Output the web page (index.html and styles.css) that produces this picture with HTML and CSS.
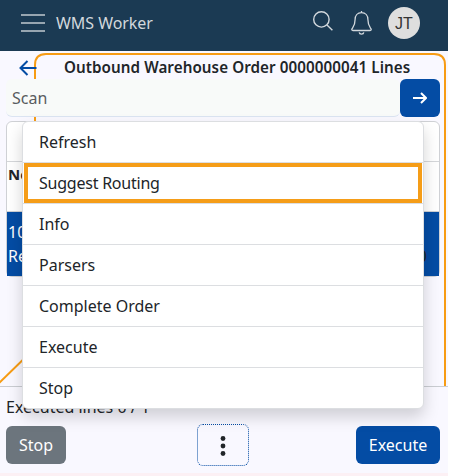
FILE: index.html
```html
<!DOCTYPE html>
<html lang="en">
<head>
<meta charset="utf-8">
<title>WMS Worker</title>
<link rel="stylesheet" href="styles.css">
</head>
<body>
<div class="app">
  <header class="topbar">
    <svg class="menu-icon" width="24" height="20" viewBox="0 0 24 20"><path d="M0 2h24M0 10h24M0 18h24"/></svg>
    <span class="brand">WMS Worker</span>
    <svg class="search" width="20" height="20" viewBox="0 0 20 20"><circle cx="8.4" cy="8.4" r="7.7"/><path d="M14 14l5.4 5.2"/></svg>
    <svg class="bell" width="21" height="24" viewBox="0 0 21 24"><path d="M10.5 0v2M10.5 1.7C6.4 1.7 4.1 4.8 4.1 8.4c0 5.4-1.3 6.900-2.800 9-.8 1.100-.7 2.100.7 2.100h17c1.400 0 1.500-1 .7-2.100-1.500-2.100-2.800-3.600-2.800-9C16.900 4.800 14.600 1.700 10.500 1.700zM8.200 21.400c.3 2.200 4.300 2.200 4.600 0"/></svg>
    <span class="avatar">JT</span>
  </header>
  <main class="content">
    <svg class="backdrop" width="448" height="335" viewBox="0 0 448 335"><path d="M-2 333L35 297V14Q35 3 46 3H434Q445 3 445 14V335"/></svg>
    <div class="title-row">
      <svg class="back" width="18" height="16" viewBox="0 0 18 16"><path d="M8.500 1L1.500 8l7 7M1.500 8H17.500"/></svg>
      <h1>Outbound Warehouse Order 0000000041 Lines</h1>
    </div>
    <div class="scan">
      <input type="text" placeholder="Scan">
      <button class="go" aria-label="Go"><svg width="14" height="12" viewBox="0 0 14 12"><path d="M8 1l5 5-5 5M13 6H0"/></svg></button>
    </div>
    <div class="table">
      <div class="filter"></div>
      <div class="head">No.</div>
      <div class="line"><span>10</span><span>Released<i>0</i></span></div>
    </div>
  </main>
  <footer class="footer">
    <div class="status">Executed lines 0 / 1</div>
    <div class="actions">
      <button class="btn stop">Stop</button>
      <button class="more" aria-label="More"><svg width="6" height="20" viewBox="0 0 6 20"><circle cx="3" cy="2.500" r="2.400"/><circle cx="3" cy="10" r="2.400"/><circle cx="3" cy="17.500" r="2.400"/></svg></button>
      <button class="btn execute">Execute</button>
    </div>
  </footer>
  <ul class="menu">
    <li>Refresh</li>
    <li class="active">Suggest Routing</li>
    <li>Info</li>
    <li>Parsers</li>
    <li>Complete Order</li>
    <li>Execute</li>
    <li>Stop</li>
  </ul>
</div>
</body>
</html>
```
FILE: styles.css
```css
* { box-sizing: border-box; }
body {
  margin: 0;
  background: #fff;
  color: #212529;
  font: 16px/24px "Noto Sans", sans-serif;
  overflow: hidden;
}
button, input { font: inherit; margin: 0; }
svg { display: block; flex: none; fill: none; }
.app {
  position: relative;
  display: flex;
  flex-direction: column;
  width: 448px;
  height: 476px;
  background: #fcf0f4;
}
.topbar {
  display: flex;
  align-items: center;
  height: 51px;
  padding: 0 28px 5px 21px;
  background: #1b3a53;
  color: #d2d8dd;
}
.menu-icon { stroke: #97a5b0; stroke-width: 1.8; }
.brand { margin-left: 11px; flex: 1; letter-spacing: -.05px; }
.search { stroke: #d2d8dd; stroke-width: 1.4; margin-right: 18px; margin-top: -4px; }
.bell { stroke: #d2d8dd; stroke-width: 1.3; margin-right: 16px; }
.avatar {
  width: 32px;
  height: 32px;
  border-radius: 50%;
  background: #dedede;
  color: #333;
  font: 16px/33px "Liberation Sans", sans-serif;
  text-align: center;
}
.content {
  position: relative;
  height: 335px;
  padding: 0 8px 0 6px;
  background: #f9f8ff;
}
.backdrop {
  position: absolute;
  left: 0;
  top: 0;
  stroke: #f79c14;
  stroke-width: 2;
}
.title-row {
  position: relative;
  display: flex;
  align-items: center;
  height: 28px;
  padding: 5px 0 0 13px;
}
.back { stroke: #044ca4; stroke-width: 2; }
h1 {
  margin: -2px 0 0 27px;
  font-size: 15.2px;
  font-weight: 600;
  letter-spacing: .07px;
  line-height: 24px;
  white-space: nowrap;
}
.scan { position: relative; display: flex; height: 38px; }
.scan input {
  flex: 1;
  min-width: 0;
  padding: 0 6px;
  border: 0;
  border-bottom: 1px solid #dbe4f2;
  border-radius: 6px;
  background: #f8faf9;
}
.scan input::placeholder { color: #595c5f; opacity: 1; }
.go {
  display: grid;
  place-items: center;
  width: 40px;
  padding: 0;
  border: 0;
  border-radius: 6px;
  background: #044ca4;
  stroke: #fff;
  stroke-width: 2;
}
.table {
  position: relative;
  height: 156px;
  margin-top: 4px;
  border: 1px solid #cfd1d5;
  border-radius: 6px;
  background: #fff;
}
.filter { height: 40px; border-bottom: 1px solid #d5d7da; }
.head { height: 50px; padding: 0 1px; border-bottom: 1px solid #cfd1d5; font-weight: 700; font-size: 15px; }
.line {
  display: flex;
  flex-direction: column;
  height: 64px;
  padding: 8px 12px 8px 1px;
  background: #044ca4;
  color: #fff;
}
.line span { display: flex; justify-content: space-between; }
.line i { color: #212529; font-style: normal; }
.footer {
  height: 87px;
  padding: 8px 8px 0 6px;
  border-top: 1px solid #cacdd2;
  background: #f9f8ff;
}
.actions { display: flex; justify-content: space-between; align-items: center; height: 42px; margin-top: 5px; }
.btn {
  height: 38px;
  padding: 0;
  border: 0;
  border-radius: 6px;
  color: #fff;
}
.stop { width: 60px; background: #6c757d; }
.execute { width: 84px; background: #044ca4; }
.more {
  display: grid;
  place-items: center;
  width: 52px;
  height: 42px;
  margin-left: 24px;
  padding: 2px 0 0;
  border: 1px dotted #044ca4;
  border-radius: 6px;
  background: transparent;
}
.more svg { fill: #212529; }
.menu {
  position: absolute;
  left: 22px;
  top: 121px;
  width: 402px;
  margin: 0;
  padding: 0;
  list-style: none;
  border: 1px solid #dcdee1;
  border-radius: 6px;
  background: #fff;
  box-shadow: 0 8px 16px rgba(0, 0, 0, .17);
}
.menu li { height: 41px; padding: 8px 16px; border-bottom: 1px solid #dcdee1; }
.menu li:last-child { height: 40px; border-bottom: 0; }
.menu .active { position: relative; letter-spacing: -.23px; }
.menu .active::after {
  content: "";
  position: absolute;
  inset: 0 1px;
  border: 4px solid #f59d18;
}
```
